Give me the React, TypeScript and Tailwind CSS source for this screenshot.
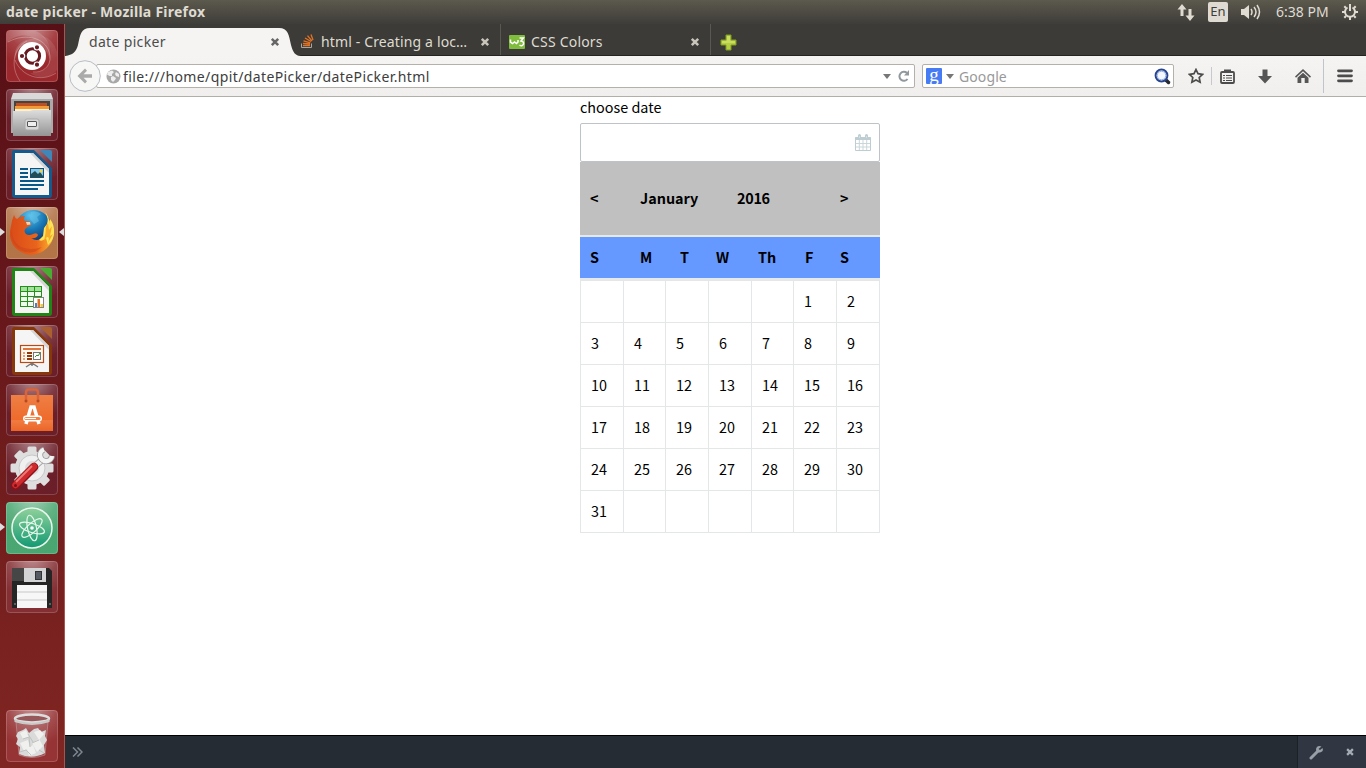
import React from "react";

const days: (number | null)[] = [
  ...Array(5).fill(null),
  ...Array.from({ length: 31 }, (_, i) => i + 1),
  ...Array(6).fill(null),
];

function Close({ color }: { color: string }) {
  return (
    <svg width="10" height="10" viewBox="0 0 10 10" className="shrink-0">
      <path d="M1.8 1.8 8.2 8.2M8.2 1.8 1.8 8.2" stroke={color} strokeWidth="2.5" />
    </svg>
  );
}

function Tile({ bg, children }: { bg: string; children: React.ReactNode }) {
  return (
    <svg width="52" height="52" viewBox="0 0 52 52" className="shrink-0">
      <defs>
        <radialGradient id="shine" cx=".5" cy="-.1" r=".8">
          <stop offset="0" stopColor="#fff" stopOpacity=".5" />
          <stop offset=".6" stopColor="#fff" stopOpacity=".14" />
          <stop offset="1" stopColor="#fff" stopOpacity=".02" />
        </radialGradient>
      </defs>
      <rect width="52" height="52" rx="4" fill={bg} />
      <rect width="52" height="52" rx="4" fill="url(#shine)" />
      {children}
      <rect x=".5" y=".5" width="51" height="51" rx="3.5" fill="none" stroke="#fff" strokeOpacity=".18" />
    </svg>
  );
}

function Office({ c, light, children }: { c: string; light: string; children: React.ReactNode }) {
  return (
    <g>
      <path d="M8 2H28L46 20V47Q46 50 43 50H9Q6 50 6 47V4Q6 2 8 2Z" fill={c} />
      <path d="M34 2H44Q46 2 46 4V14Z" fill={light} />
      <path d="M9 5H27L43 21V47H9Z" fill="#f5f5f5" />
      <path d="M27 5 43 21V25L24 5Z" fill="#d5d5d5" />
      {children}
    </g>
  );
}

function Launcher() {
  const dark = "#681a25";
  return (
    <aside className="relative flex w-[65px] shrink-0 flex-col items-center border-r border-[#a95450] bg-linear-to-b from-[#561016] via-[#6c1a1c] to-[#802622] pt-[6px] pb-[6px]">
      <div className="flex flex-col gap-[7px]">
        <Tile bg="#982428">
          <path d="M9 30C7 16 16 9 28 9C22 3 8 5 1 13V4Q1 1 4 1H30C42 6 46 18 44 30C41 18 33 12 25 12C16 13 10 20 9 30Z" fill="#fff" fillOpacity=".16" />
          <path d="M51 40C44 49 32 49 24 43C36 44 43 38 44 29C47 20 42 10 34 5Q48 9 51 22Z" fill="#fff" fillOpacity=".1" />
          <g fill="none" stroke="#fff" strokeOpacity=".28">
            <path d="M2 12C20 2 42 8 44 26C45 37 36 43 27 42" />
            <path d="M14 51C4 37 7 18 21 11" />
            <path d="M50 43C35 53 15 46 9 30" />
          </g>
          <circle cx="26" cy="26" r="14" fill="#fff" />
          <circle cx="26.4" cy="26" r="7.2" fill="none" stroke="#681922" strokeWidth="3" />
          <g stroke="#fff" strokeWidth="1.2" fill="#681922">
            <circle cx="16" cy="26" r="2.7" />
            <circle cx="31" cy="17.3" r="2.7" />
            <circle cx="31" cy="34.7" r="2.7" />
          </g>
        </Tile>
        <Tile bg={dark}>
          <defs>
            <linearGradient id="cab" x2="0" y2="1">
              <stop stopColor="#ddd" />
              <stop offset="1" stopColor="#949494" />
            </linearGradient>
          </defs>
          <path d="M7 4H45L47 10V44H5V10Z" fill="#d9d9d9" />
          <path d="M5 10H47V44H5Z" fill="#aaa" />
          <rect x="8" y="12" width="36" height="14" fill="#484341" />
          <path d="M10 14H41V18H10Z" fill="#bd4f20" />
          <path d="M9 17H43V24H9Z" fill="#f29b35" />
          <path d="M9 20H43V22H9Z" fill="#fff0d0" />
          <path d="M7 22H24L27 21H45V47H7Z" fill="url(#cab)" />
          <rect x="19" y="30" width="14" height="11" rx="2" fill="#d8d8d8" stroke="#aaa" />
          <rect x="21.5" y="32.5" width="9" height="5" rx=".5" fill="#eee" stroke="#555" />
        </Tile>
        <Tile bg={dark}>
          <Office c="#17598b" light="#3f87b9">
            <path d="M14 21H22M14 25H22M14 29H22M14 33H38M14 37H38M14 41H32" stroke="#07588a" strokeWidth="2" />
            <rect x="24.5" y="20.5" width="13" height="9" fill="#85c8ed" stroke="#174f70" />
            <path d="M25 29V26L29 23 32 26 34 24 37 28V29Z" fill="#214c54" />
            <circle cx="35" cy="23" r="1.5" fill="#f3d340" />
          </Office>
        </Tile>
        <Tile bg="#b17144">
          <defs>
            <radialGradient id="globe" cx=".4" cy=".15" r=".8">
              <stop stopColor="#5bc3ed" />
              <stop offset=".5" stopColor="#1878b5" />
              <stop offset="1" stopColor="#102d66" />
            </radialGradient>
            <linearGradient id="fox" x1="0" y1="0" x2="1" y2="0">
              <stop stopColor="#d94b18" />
              <stop offset=".6" stopColor="#e9641c" />
              <stop offset=".85" stopColor="#f79a28" />
              <stop offset="1" stopColor="#ffc93d" />
            </linearGradient>
          </defs>
          <circle cx="27.500" cy="21" r="18" fill="url(#globe)" />
          <path d="M25 5Q30 3 35 7L31 10 33 14 28 17 24 12Z" fill="#6cc7e7" fillOpacity=".5" />
          <path d="M8 8Q9 11 11 12Q14 9 19 9Q17 12 19 14L24 14.500 25 18 20 21Q17 24 20 27Q23 29 27 27Q31 25 32 28Q30 32 25 31Q32 36 38 29Q41 25 39 19L43 21 42 11Q48 19 48 27Q47 35 41 41Q34 48 24 48Q13 46 7 38Q2 29 5 19Q6 12 8 8Z" fill="url(#fox)" />
          <path d="M39 5Q43 12 41 17L38 21 37 29 33 33Q36 35 40 31L42 38Q48 33 48 24Q48 17 44 12L44 18Q43 9 39 5Z" fill="#ffe255" />
          <path d="M40 19 42 16 43 23 46 19 44 29 47 27 42 36Q44 29 41 30L38 34Q40 26 40 19Z" fill="#f6ab2b" />
          <path d="M20 15 24 15 24.500 17.500 21 18Z" fill="#f8d3b4" />
          <path d="M6 22Q5 34 15 40Q25 44 36 40Q25 50 13 42Q3 34 6 22Z" fill="#c6421d" fillOpacity=".45" />
        </Tile>
        <Tile bg={dark}>
          <Office c="#218516" light="#49ad31">
            <rect x="14" y="20" width="22" height="21" fill="#239118" />
            {[0, 1, 2, 3].map((r) =>
              [0, 1, 2].map((k) => (
                <rect key={`${r}-${k}`} x={15 + k * 7} y={21 + r * 5} width="6" height="4" fill={r === 0 ? "#a6dfa0" : "#effbed"} />
              )),
            )}
            <rect x="27.5" y="31.5" width="10" height="10" fill="#fff" stroke="#828282" />
            <path d="M29 37H31V41H29Z" fill="#4780c8" />
            <path d="M31.500 33H34V41H31.500Z" fill="#e66e20" />
            <path d="M34.500 38H37V41H34.500Z" fill="#f3cb30" />
          </Office>
        </Tile>
        <Tile bg={dark}>
          <Office c="#87380b" light="#aa602f">
            <rect x="14.500" y="20.500" width="23" height="17" fill="#fff9f0" stroke="#b64a18" strokeWidth="1.200" />
            <path d="M17 24H35" stroke="#e0763d" strokeWidth="2" />
            <path d="M17 28H19M17 31H19M17 34H19" stroke="#ed9d70" strokeWidth="2" />
            <path d="M21 28H26M21 31H26M21 34H26" stroke="#963909" strokeWidth="2" />
            <rect x="27.500" y="27.500" width="7" height="7" fill="#fff" stroke="#777" />
            <path d="M29 32 31 30 32 31 34 28" stroke="#319329" fill="none" />
            <path d="M26 38V41M26 38 20 42M26 38 32 42" stroke="#777" strokeWidth="1.500" />
          </Office>
        </Tile>
        <Tile bg={dark}>
          <defs>
            <linearGradient id="bag" x2="0" y2="1">
              <stop stopColor="#ee7f45" />
              <stop offset=".7" stopColor="#ee6a2b" />
              <stop offset=".71" stopColor="#f07c42" />
              <stop offset="1" stopColor="#ec6426" />
            </linearGradient>
          </defs>
          <path d="M5 11H47V47H5Z" fill="url(#bag)" />
          <path d="M20 17V8.500Q20 5.500 23 5.500H29Q32 5.500 32 8.500V17" fill="none" stroke="#d9633a" strokeWidth="2.500" />
          <circle cx="20" cy="17" r="1.500" fill="#b54a20" />
          <circle cx="32" cy="17" r="1.500" fill="#b54a20" />
          <path d="M20 40 25 23H28L33 40" fill="none" stroke="#fff" strokeWidth="3.500" />
          <rect x="17.700" y="32.200" width="17.600" height="4.600" rx="2.300" fill="#f08145" stroke="#fff" strokeWidth="1.400" />
          <path d="M19 34.500H30" stroke="#fff" strokeWidth="1.200" />
        </Tile>
        <Tile bg={dark}>
          <g transform="translate(26 25)">
            {[0, 45, 90, 135].map((a) => (
              <rect key={a} x="-4.500" y="-21.500" width="9" height="43" rx="1.500" fill="#dedede" transform={`rotate(${a})`} />
            ))}
            <circle r="17" fill="#dedede" />
            <circle r="13" fill="#f0f0f0" stroke="#c8c8c8" />
            <circle r="7" fill="#dadada" />
          </g>
          <path d="M28 24 37 16" stroke="#a5a5a5" strokeWidth="7" />
          <path d="M28 24 37 16" stroke="#f0f0f0" strokeWidth="5" />
          <path d="M38 6.500A6 6 0 1 0 46 13" fill="none" stroke="#999" strokeWidth="6" />
          <path d="M38 6.500A6 6 0 1 0 46 13" fill="none" stroke="#f4f4f4" strokeWidth="4.500" />
          <path d="M9.500 42.500 28 24" stroke="#8e1118" strokeWidth="8.500" strokeLinecap="round" />
          <path d="M9.500 42 28 23.500" stroke="#cf2a2e" strokeWidth="6.500" strokeLinecap="round" />
          <path d="M10 39 26 23" stroke="#ee7a78" strokeWidth="1.800" />
          <circle cx="9.500" cy="42.500" r="1.500" fill="#781117" />
        </Tile>
        <Tile bg="#47a56e">
          <defs>
            <linearGradient id="atom" x2="0" y2="1">
              <stop stopColor="#8fd19b" />
              <stop offset="1" stopColor="#129972" />
            </linearGradient>
          </defs>
          <circle cx="26" cy="26" r="20" fill="url(#atom)" stroke="#eaf7ef" strokeWidth="1.500" />
          <g fill="none" stroke="#e6f8ec" strokeWidth="1.200">
            <ellipse cx="26" cy="26" rx="13" ry="4.500" transform="rotate(18 26 26)" />
            <ellipse cx="26" cy="26" rx="13" ry="4.500" transform="rotate(78 26 26)" />
            <ellipse cx="26" cy="26" rx="13" ry="4.500" transform="rotate(138 26 26)" />
          </g>
          <circle cx="26" cy="26" r="1.800" fill="#fff" />
        </Tile>
        <Tile bg="#812b30">
          <path d="M6 7H43L46 10V47H6Z" fill="#252525" />
          <rect x="6" y="7" width="12" height="13" fill="#464646" />
          <rect x="18" y="7" width="22" height="14" fill="#d3d4d6" />
          <rect x="29.500" y="10.500" width="6" height="8" fill="#555b65" stroke="#333" />
          <rect x="11" y="24" width="30" height="23" fill="#f7f7f7" />
          <path d="M11 31H41M11 39H41" stroke="#c7c7c7" />
          <path d="M8 43H10M43 43H45" stroke="#999" />
        </Tile>
      </div>
      <div className="mt-auto">
        <Tile bg="#942f31">
          <path d="M10 12 13 45Q26 50 39 45L42 12Z" fill="#ddd" fillOpacity=".12" stroke="#d2c4c4" strokeOpacity=".4" />
          <path d="M12 22 17 20 20 18 23 23 28 19 32 18 35 22 40 20 39 26 41 30 38 35 39 43Q26 50 13 44L14 37 10 34 12 29 10 26Z" fill="#d9dad9" />
          <path d="M14 23 20 20 23 27 17 29ZM28 22 34 20 38 24 33 30ZM14 33 22 30 24 37 18 41ZM26 33 33 29 37 36 31 42ZM21 39 27 35 30 43 23 46Z" fill="#f0f0ef" />
          <path d="M17 29 23 27 24 37M26 33 33 30M14 42 20 40 25 45M33 40 38 43M22 24 27 32" stroke="#bfc2bf" fill="none" />
          <ellipse cx="26" cy="8.500" rx="17" ry="4" fill="#96585a" stroke="#dcdddc" strokeWidth="2.500" />
          <path d="M8.500 9V12Q26 18 43.500 12V9Q26 16.500 8.500 9Z" fill="#c9cac8" />
        </Tile>
      </div>
      <svg width="5" height="10" className="absolute left-0 top-[203px]">
        <path d="M0 1 5 5 0 9Z" fill="#ddd" />
      </svg>
      <svg width="6" height="10" className="absolute left-[58px] top-[203px]">
        <path d="M6 1 1 5 6 9Z" fill="#ddd" />
      </svg>
      <svg width="5" height="10" className="absolute left-0 top-[498px]">
        <path d="M0 1 5 5 0 9Z" fill="#ddd" />
      </svg>
    </aside>
  );
}

function TopPanel() {
  return (
    <header className="flex h-6 shrink-0 items-center bg-linear-to-b from-[#5c594d] to-[#3e3d39] pl-[6px] text-[#dfdbd2]">
      <span className="w-[1171px] pb-[2px] text-[14px] font-bold tracking-[0.25px]">date picker - Mozilla Firefox</span>
      <svg width="18" height="17" viewBox="0 0 18 17" className="shrink-0">
        <path d="M5 0 0.500 5.500H3.500V12H6.500V5.500H9.500ZM13 17 17.500 11.500H14.500V5H11.500V11.500H8.500Z" fill="#dfdbd2" />
      </svg>
      <span className="ml-[13px] flex h-5 w-5 items-center justify-center rounded-[2px] bg-[#dfdbd2] text-[13px] text-[#3f3e39]">En</span>
      <svg width="21" height="18" viewBox="0 0 21 18" fill="none" className="ml-[13px] shrink-0">
        <path d="M0 6H3L8 2V16L3 12H0Z" fill="#dfdbd2" />
        <path d="M10 6Q12 9 10 12M13 4Q17 9 13 14M16 2Q21 9 16 16" stroke="#dfdbd2" strokeWidth="1.500" />
      </svg>
      <span className="ml-[14px] w-[66px] pb-[2px] text-[14px] whitespace-nowrap">6:38 PM</span>
      <svg width="16" height="16" viewBox="0 0 16 16" fill="none" stroke="#dfdbd2" className="shrink-0">
        <path d="M5.500 3.500A5 5 0 1 0 10.500 3.500" strokeWidth="2" />
        <path d="M8 0V7" strokeWidth="2" />
        <path d="M2.300 2.300 4 4M0 8H3M2.300 13.700 4 12M8 13V16M13.700 13.700 12 12M13 8H16M13.700 2.300 12 4" strokeWidth="2" />
      </svg>
    </header>
  );
}

function Tabs() {
  return (
    <div className="flex h-8 shrink-0 border-b border-[#252420] bg-[#3c3b37] text-[14px] text-[#dfdbd2]">
      <div className="grid h-8 w-[235px] shrink-0">
        <svg width="236" height="32" viewBox="0 0 236 32" className="[grid-area:1/1]">
          <path d="M0 32C8 31 11 28 13 21C15 11 16 4 25 4H214C223 4 224 11 226 21C228 28 230 32 236 32Z" fill="#f5f4f3" />
        </svg>
        <div className="flex items-center pt-[3px] pr-[21px] pl-6 text-[#4c4c4c] [grid-area:1/1]">
          <span className="flex-1 pb-px tracking-[0.33px]">date picker</span>
          <Close color="#666" />
        </div>
      </div>
      <div className="flex h-[31px] w-[201px] items-center border-r border-[#5a594f] pt-[4px] pr-[10px]">
        <svg width="14" height="15" viewBox="0 0 14 15" fill="none" className="shrink-0">
          <path d="M1.500 9.500V13.500H11.500V9.500" stroke="#aaa5a0" />
          <path d="M3 11.500H10M3 9.300 10 10M3.500 6.800 10.300 8.800M5 4 11 7.500M7.500 1.700 12 7M11 0.500 13 6" stroke="#e57222" strokeWidth="1.300" />
        </svg>
        <span className="ml-[7px] flex-1 tracking-[0.14px] whitespace-nowrap">html - Creating a loc…</span>
        <Close color="#c9c5bb" />
      </div>
      <div className="flex h-[31px] w-[210px] items-center border-r border-[#5a594f] pt-[4px] pr-[10px] pl-[8px]">
        <svg width="16" height="14" viewBox="0 0 16 14" className="shrink-0">
          <rect width="16" height="14" rx="1" fill="#80bd3c" />
          <path d="M1.500 4.500V7L3.500 8.500 5.500 7 7.500 8.500 9 7V5M10.500 3H14.300L12 6Q15 6.500 14.500 9Q13 12 10.500 10" fill="none" stroke="#fff" strokeWidth="1.500" />
        </svg>
        <span className="ml-[6px] flex-1 tracking-[0.2px]">CSS Colors</span>
        <Close color="#c9c5bb" />
      </div>
      <svg width="17" height="17" viewBox="0 0 17 17" className="mt-[10px] ml-[9px]">
        <path d="M6 1H11V6H16V11H11V16H6V11H1V6H6Z" fill="#b6ce43" stroke="#7e9d20" />
        <path d="M7 2H10V7H15V9H2V7H7Z" fill="#d8e874" fillOpacity=".6" />
      </svg>
    </div>
  );
}

function NavBar() {
  return (
    <div className="flex h-[41px] shrink-0 items-center border-b border-[#b2afa8] bg-linear-to-b from-[#f5f4f3] to-[#f0efed] pl-[4px] text-[14px] text-[#3d3d3d]">
      <svg width="32" height="32" viewBox="0 0 32 32" className="z-10 shrink-0">
        <circle cx="16" cy="16" r="15.300" fill="#f7f7f6" stroke="#b7bdc5" />
        <path d="M8.500 16 16 8.500 18 10.800 14.600 14.300H23V17.700H14.600L18 21.200 16 23.500Z" fill="#aaa" />
      </svg>
      <div className="-ml-[5px] flex h-[24px] w-[819px] shrink-0 items-center rounded-[2px] border border-[#b4b0aa] bg-white pl-[9px]">
        <svg width="15" height="15" viewBox="0 0 15 15" className="shrink-0">
          <circle cx="7.500" cy="7.500" r="7" fill="#a8a8a8" />
          <path d="M2 3 6 1.500 8 3 6 5 6 7 3.500 7 1 5.500ZM7 7 10 9 9 11 7 13 5 11V8ZM10 3 13 5V8L10 7 9 5Z" fill="#eee" />
        </svg>
        <span className="ml-[2px] flex-1 tracking-[0.39px] whitespace-nowrap">file:///home/qpit/datePicker/datePicker.html</span>
        <svg width="8" height="5" viewBox="0 0 8 5" className="mt-px shrink-0"><path d="M0 0H8L4 5Z" fill="#777" /></svg>
        <svg width="13" height="13" viewBox="0 0 13 13" className="mr-[4px] ml-[6px] shrink-0" fill="none">
          <path d="M10 3A4.500 4.500 0 1 0 10.500 9" stroke="#91999f" strokeWidth="2" />
          <path d="M7 5.500H12V0Z" fill="#91999f" />
        </svg>
      </div>
      <div className="ml-[7px] flex h-[24px] w-[252px] shrink-0 items-center rounded-[2px] border border-[#b4b0aa] bg-white pl-[3px]">
        <span className="flex h-4 w-4 items-center justify-center rounded-[1px] bg-[#477bf4] pb-[4px] font-['Liberation_Serif',serif] text-[19px] leading-none text-white">g</span>
        <svg width="8" height="5" viewBox="0 0 8 5" className="mt-px ml-[4px] shrink-0"><path d="M0 0H8L4 5Z" fill="#777" /></svg>
        <span className="ml-[5px] flex-1 tracking-[0.1px] text-[#999]">Google</span>
        <svg width="17" height="17" viewBox="0 0 17 17" fill="none" className="mr-[2px] shrink-0">
          <path d="M12 12 14.500 14.500" stroke="#292b33" strokeWidth="3.500" strokeLinecap="round" />
          <circle cx="7.500" cy="7.500" r="5.900" fill="#f5f9ff" stroke="#29458f" strokeWidth="2" />
          <circle cx="7.500" cy="7.500" r="4.300" stroke="#92aedd" />
        </svg>
      </div>
      <svg width="16" height="16" viewBox="0 0 16 16" fill="none" className="ml-[14px] shrink-0">
        <path d="M8 1.500 10 5.700 14.600 6.300 11.200 9.500 12.100 14.200 8 12 3.900 14.200 4.800 9.500 1.400 6.300 6 5.700Z" stroke="#4c4c4c" strokeWidth="1.700" />
      </svg>
      <span className="ml-[7px] h-[18px] w-px bg-[#c7c9cc]" />
      <svg width="15" height="15" viewBox="0 0 15 15" fill="none" className="ml-[8px] shrink-0">
        <rect x="1" y="3" width="13" height="11" rx="1" stroke="#4c4c4c" strokeWidth="1.800" />
        <path d="M4 0.500H11V4H4Z" fill="#4c4c4c" />
        <path d="M3 6.500H5M3 9H5M3 11.500H5M6 6.500H12M6 9H12M6 11.500H12" stroke="#4c4c4c" strokeWidth="1.100" />
      </svg>
      <svg width="14" height="15" viewBox="0 0 14 15" className="ml-[23px] shrink-0">
        <path d="M4.500 0.500H9.500V7H14L7 14.500 0 7H4.500Z" fill="#565656" />
      </svg>
      <svg width="16" height="15" viewBox="0 0 16 15" className="ml-[23px] shrink-0">
        <path d="M8 0 16 7.500 15 8.700 8 2.300 1 8.700 0 7.500Z" fill="#565656" />
        <path d="M8 3.700 13.500 8.700V14H9.700V9H6.300V14H2.500V8.700Z" fill="#565656" />
      </svg>
      <span className="ml-[12px] h-[34px] w-px bg-[#bec5cc]" />
      <svg width="16" height="14" viewBox="0 0 16 14" className="ml-[13px] shrink-0">
        <path d="M1.500 1.800H14.500M1.500 6.800H14.500M1.500 11.800H14.500" stroke="#4c4c4c" strokeWidth="2.800" strokeLinecap="round" />
      </svg>
    </div>
  );
}

function DatePicker() {
  return (
    <section className="ml-[515px] w-[300px] font-['Noto_Sans_CJK_SC',sans-serif] text-[14.4px] leading-[22px] text-black">
      <div className="h-[26px] leading-[20px]">choose date</div>
      <div className="flex h-[39px] items-center justify-end rounded-[2px] border border-[#bdc3c7] pr-[8px] pb-px">
        <svg width="16" height="17" viewBox="0 0 16 17" fill="none">
          <path d="M.5 3.500H15.500V16.500H.5Z" stroke="#bdcdd1" />
          <path d="M.5 3H15.500V6H.5Z" fill="#bdcdd1" />
          <path d="M4.300 6V16M8 6V16M11.700 6V16M1 9.500H15M1 13H15" stroke="#cad7da" />
          <path d="M4.500 1.500V4.500M11.500 1.500V4.500" stroke="#bdcdd1" strokeWidth="3" strokeLinecap="round" />
          <path d="M4.500 2V4M11.500 2V4" stroke="#d5e0e3" />
        </svg>
      </div>
      <div className="grid h-[73px] grid-cols-[50px_97px_103px_auto] items-center bg-[#c0c0c0] pb-[2px] pl-[10px] font-bold">
        <span>&lt;</span>
        <span>January</span>
        <span className="tracking-[-0.3px]">2016</span>
        <span>&gt;</span>
      </div>
      <div className="grid h-[45px] grid-cols-[50px_40px_36px_42px_47px_35px_auto] items-center border-t-2 border-b-2 border-[#e6e9e9] bg-[#6699ff] pb-[2px] pl-[10px] font-bold">
        <span>S</span>
        <span>M</span>
        <span>T</span>
        <span>W</span>
        <span>Th</span>
        <span>F</span>
        <span>S</span>
      </div>
      <div className="grid auto-rows-[42px] grid-cols-[43px_42px_43px_43px_42px_43px_43px] border-r border-b border-[#e4e7e7]">
        {days.map((d, i) => (
          <div key={i} className="flex items-center border-t border-l border-[#e4e7e7] pb-[2px] pl-[10px]">
            {d}
          </div>
        ))}
      </div>
    </section>
  );
}

export default function App() {
  return (
    <div className="flex h-[768px] w-[1366px] flex-col overflow-hidden bg-white font-['Noto_Sans',sans-serif]">
      <TopPanel />
      <div className="flex min-h-0 flex-1">
        <Launcher />
        <div className="flex min-w-0 flex-1 flex-col">
          <Tabs />
          <NavBar />
          <main className="flex-1 bg-white">
            <DatePicker />
          </main>
          <footer className="flex h-[33px] shrink-0 items-center border-t border-black bg-[#252c33] pl-[7px]">
            <svg width="11" height="10" viewBox="0 0 11 10" fill="none" className="mr-auto">
              <path d="M1 .5 5.500 5 1 9.500M5.500 .5 10 5 5.500 9.500" stroke="#7d8790" strokeWidth="1.500" />
            </svg>
            <div className="flex h-full w-[69px] items-center border-l border-[#1b2127] bg-[#303743] pl-[11px]">
              <svg width="15" height="15" viewBox="0 0 15 15" fill="none">
                <path d="M2 13 9 6" stroke="#989fa6" strokeWidth="3" strokeLinecap="round" />
                <path d="M12.500 1.500Q8 0 7 4Q7 8 11 7.500Q15 6.500 13.500 3L11 5 9.500 4Z" fill="#989fa6" />
              </svg>
              <span className="ml-[21px] scale-90"><Close color="#a5abb2" /></span>
            </div>
          </footer>
        </div>
      </div>
    </div>
  );
}
